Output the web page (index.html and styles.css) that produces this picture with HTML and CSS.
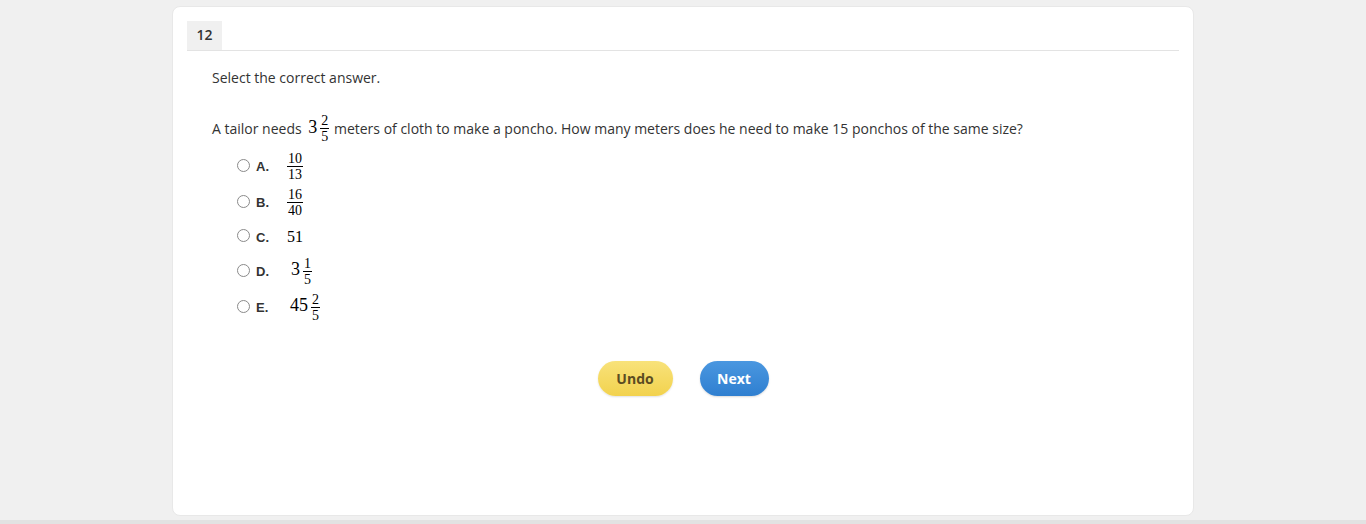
FILE: index.html
```html
<!DOCTYPE html>
<html>
<head>
<meta charset="utf-8">
<link rel="stylesheet" href="styles.css">
</head>
<body>
<div class="page">
  <div class="card">
    <div class="card-head">
      <span class="qnum">12</span>
    </div>
    <div class="content">
      <p class="instr">Select the correct answer.</p>
      <p class="question">A tailor needs <span class="math mixed"><span class="whole">3</span><span class="frac"><span class="num">2</span><span class="den">5</span></span></span> meters of cloth to make a poncho. How many meters does he need to make 15 ponchos of the same size?</p>
      <ul class="options">
        <li class="opt"><span class="radio"></span><span class="letter">A.</span><span class="math"><span class="frac"><span class="num">10</span><span class="den">13</span></span></span></li>
        <li class="opt"><span class="radio"></span><span class="letter">B.</span><span class="math"><span class="frac"><span class="num">16</span><span class="den">40</span></span></span></li>
        <li class="opt opt-plain"><span class="radio"></span><span class="letter">C.</span><span class="math"><span class="plain">51</span></span></li>
        <li class="opt"><span class="radio"></span><span class="letter">D.</span><span class="math mixed indent"><span class="whole">3</span><span class="frac"><span class="num">1</span><span class="den">5</span></span></span></li>
        <li class="opt"><span class="radio"></span><span class="letter">E.</span><span class="math mixed"><span class="whole">45</span><span class="frac"><span class="num">2</span><span class="den">5</span></span></span></li>
      </ul>
      <div class="actions">
        <button class="btn btn-undo">Undo</button>
        <button class="btn btn-next">Next</button>
      </div>
    </div>
  </div>
  <div class="bottom-bar"></div>
</div>
</body>
</html>
```
FILE: styles.css
```css
html, body {
  margin: 0;
  padding: 0;
  background: #f0f0f0;
}
body {
  font-family: "Open Sans", "Liberation Sans", sans-serif;
  color: #333;
  font-size: 14px;
}
.page {
  height: 524px;
  display: flex;
  flex-direction: column;
  align-items: center;
}
.card {
  margin-top: 6px;
  width: 1022px;
  height: 510px;
  background: #fff;
  border: 1px solid #e8e8e8;
  border-radius: 8px;
  padding: 14px 14px 0 14px;
  box-sizing: border-box;
}
.card-head {
  display: flex;
  border-bottom: 1px solid #e3e3e3;
}
.qnum {
  display: inline-block;
  background: #f0f0f0;
  width: 35px;
  height: 29px;
  line-height: 28px;
  text-align: center;
  font-size: 14px;
  font-weight: 600;
  color: #333;
}
.content {
  padding-left: 25px;
}
.instr {
  margin: 17px 0 0 0;
  line-height: 20px;
}
.question {
  margin: 26px 0 0 0;
  display: flex;
  align-items: center;
  white-space: pre;
  line-height: 20px;
}
.math {
  font-family: "Liberation Serif", "DejaVu Serif", serif;
  color: #000;
  display: inline-flex;
  align-items: center;
}
.mixed {
  padding: 0 1px 0 3px;
}
.whole {
  font-size: 18px;
  margin-right: 3px;
  position: relative;
  top: -2px;
}
.frac {
  display: inline-flex;
  flex-direction: column;
  align-items: center;
  font-size: 14px;
  line-height: 13px;
}
.num {
  padding: 0 1px 1px;
  border-bottom: 1px solid #000;
}
.den {
  padding: 1px 1px 0;
}
.options {
  list-style: none;
  margin: 9px 0 0 25px;
  padding: 0;
  display: flex;
  flex-direction: column;
  gap: 7px;
}
.opt {
  display: flex;
  align-items: center;
  min-height: 29px;
}
.opt-plain {
  min-height: 26px;
}
.radio {
  width: 11px;
  height: 11px;
  border: 1px solid #8a8a8a;
  border-radius: 50%;
  background: #fff;
  margin-top: -3px;
}
.letter {
  font-family: "Liberation Sans", Arial, sans-serif;
  font-weight: bold;
  font-size: 13px;
  color: #333;
  margin-left: 6px;
  width: 31px;
}
.plain {
  font-size: 16px;
}
.indent {
  padding-left: 4px;
}
.actions {
  display: flex;
  justify-content: center;
  gap: 27px;
  margin-top: 39px;
  margin-left: -25px;
}
.btn {
  font-family: "Open Sans", "Liberation Sans", sans-serif;
  font-weight: bold;
  font-size: 14px;
  height: 35px;
  border-radius: 18px;
  border: none;
  padding: 0;
  cursor: pointer;
}
.btn-undo {
  width: 75px;
  background: linear-gradient(#f8e27a, #f2d24e);
  color: #5b4c22;
  box-shadow: 0 1px 2px rgba(0,0,0,0.12);
}
.btn-next {
  width: 69px;
  background: linear-gradient(#4a97e0, #2f7fd0);
  color: #fff;
  box-shadow: 0 1px 2px rgba(0,0,0,0.15);
}
.bottom-bar {
  margin-top: auto;
  width: 100%;
  height: 4px;
  background: #e2e2e2;
}
```
